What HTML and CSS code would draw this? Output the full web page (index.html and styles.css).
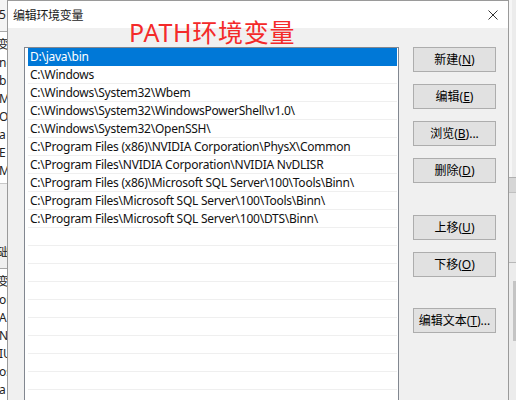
FILE: index.html
```html
<!DOCTYPE html>
<html lang="zh-CN">
<head>
<meta charset="utf-8">
<title>编辑环境变量</title>
<link rel="stylesheet" href="styles.css">
</head>
<body>
<div class="screen">
  <div class="bg-left">
    <div class="bgl-head"><span class="frag">5</span></div>
    <div class="bgl-rows">
      <div class="frag-row"><span class="frag cjk">变</span></div>
      <div class="frag-row"><span class="frag">nd</span></div>
      <div class="frag-row"><span class="frag">b</span></div>
      <div class="frag-row"><span class="frag">MS</span></div>
      <div class="frag-row"><span class="frag">Or</span></div>
      <div class="frag-row"><span class="frag">a</span></div>
      <div class="frag-row"><span class="frag">E</span></div>
      <div class="frag-row"><span class="frag">M</span></div>
    </div>
    <div class="bgl-band"><span class="frag cjk">础</span></div>
    <div class="bgl-rows">
      <div class="frag-row"><span class="frag cjk">变</span></div>
      <div class="frag-row"><span class="frag">or</span></div>
      <div class="frag-row"><span class="frag">A</span></div>
      <div class="frag-row"><span class="frag">N</span></div>
      <div class="frag-row"><span class="frag">IU</span></div>
      <div class="frag-row"><span class="frag">os</span></div>
      <div class="frag-row"><span class="frag">a</span></div>
    </div>
  </div>

  <div class="dialog">
    <div class="titlebar">
      <span class="title">编辑环境变量</span>
      <svg class="close" width="10" height="10" viewBox="0 0 10 10">
        <path d="M0.5 0.5 L9.5 9.5 M9.5 0.5 L0.5 9.5" stroke="#333" stroke-width="1" fill="none"/>
      </svg>
    </div>
    <div class="body">
      <div class="list">
        <div class="row sel">D:\java\bin</div>
        <div class="row">C:\Windows</div>
        <div class="row">C:\Windows\System32\Wbem</div>
        <div class="row">C:\Windows\System32\WindowsPowerShell\v1.0\</div>
        <div class="row">C:\Windows\System32\OpenSSH\</div>
        <div class="row">C:\Program Files (x86)\NVIDIA Corporation\PhysX\Common</div>
        <div class="row">C:\Program Files\NVIDIA Corporation\NVIDIA NvDLISR</div>
        <div class="row">C:\Program Files (x86)\Microsoft SQL Server\100\Tools\Binn\</div>
        <div class="row">C:\Program Files\Microsoft SQL Server\100\Tools\Binn\</div>
        <div class="row">C:\Program Files\Microsoft SQL Server\100\DTS\Binn\</div>
        <div class="row"></div>
        <div class="row"></div>
        <div class="row"></div>
        <div class="row"></div>
        <div class="row"></div>
        <div class="row"></div>
        <div class="row"></div>
        <div class="row"></div>
        <div class="row"></div>
        <div class="row"></div>
      </div>
      <div class="buttons">
        <button class="btn">新建(<u>N</u>)</button>
        <button class="btn">编辑(<u>E</u>)</button>
        <button class="btn">浏览(<u>B</u>)...</button>
        <button class="btn">删除(<u>D</u>)</button>
        <button class="btn gap-lg">上移(<u>U</u>)</button>
        <button class="btn">下移(<u>O</u>)</button>
        <button class="btn gap-lg2">编辑文本(<u>T</u>)...</button>
      </div>
    </div>
    <div class="annot">PATH环境变量</div>
  </div>

  <div class="bg-right">
    <div class="bgr-top"></div>
    <div class="bgr-band"></div>
    <div class="bgr-mid"></div>
    <div class="bgr-bar"></div>
  </div>
</div>
</body>
</html>
```
FILE: styles.css
```css
* { box-sizing: border-box; }

body {
  margin: 0;
  width: 516px;
  height: 400px;
  overflow: hidden;
  background: #e8e8e8;
  font-family: "Noto Sans", "Noto Sans CJK SC", sans-serif;
  font-size: 12px;
  color: #000;
}

.screen {
  display: flex;
  height: 400px;
}

/* background window, left strip */
.bg-left {
  width: 7px;
  flex: none;
  overflow: hidden;
  background: #fff;
  display: flex;
  flex-direction: column;
}
.bgl-head {
  height: 32px;
  border-bottom: 1px solid #a8a8a8;
  background: #f4f4f4;
  padding-top: 6px;
  line-height: 18px;
}
.bgl-rows {
  padding-top: 4px;
}
.frag-row {
  height: 18px;
  line-height: 18px;
  white-space: nowrap;
}
.frag {
  display: inline-block;
  margin-left: -1px;
  font-size: 12px;
  color: #222;
  white-space: nowrap;
}
.frag.cjk { margin-left: -3px; }
.bgl-band {
  margin-top: 3px;
  height: 86px;
  background: #f0f0f0;
  border-top: 1px solid #c8c8c8;
  border-bottom: 1px solid #a8a8a8;
  display: flex;
  align-items: flex-end;
  padding-bottom: 6px;
  line-height: 18px;
}

/* dialog */
.dialog {
  width: 502px;
  flex: none;
  position: relative;
  display: flex;
  flex-direction: column;
  background: #f0f0f0;
  border: 1px solid #9a9a9a;
  border-bottom: none;
}
.titlebar {
  height: 27px;
  flex: none;
  background: #fff;
  display: flex;
  align-items: center;
  justify-content: space-between;
  padding: 0 10px 0 5px;
}
.title {
  font-family: "Noto Sans CJK SC", sans-serif;
  font-size: 12px;
  letter-spacing: -0.3px;
  color: #1a1a1a;
  line-height: 16px;
  margin-top: 1px;
}
.close {
  display: block;
  margin-top: 1px;
}

.body {
  flex: 1;
  display: flex;
  gap: 14px;
  padding: 19px 0 0 16px;
  min-height: 0;
}

.list {
  width: 375px;
  flex: none;
  background: #fff;
  border: 1px solid #828790;
  border-bottom: none;
  padding: 0 1px 0 3px;
  overflow: hidden;
}
.row {
  height: 18px;
  line-height: 18px;
  padding-left: 2px;
  border-bottom: 1px solid #efefef;
  white-space: nowrap;
  letter-spacing: -0.25px;
  color: #111;
}
.row.sel {
  background: #0078d7;
  color: #fff;
  border-bottom-color: #0078d7;
}

.buttons {
  width: 83px;
  flex: none;
  display: flex;
  flex-direction: column;
  gap: 12px;
}
.btn {
  height: 25px;
  width: 83px;
  padding: 0;
  margin: 0;
  background: #e1e1e1;
  border: 1px solid #adadad;
  border-radius: 0;
  font-family: "Noto Sans", "Noto Sans CJK SC", sans-serif;
  font-size: 12px;
  color: #000;
  line-height: 23px;
}
.btn u { text-underline-offset: 1px; }
.gap-lg { margin-top: 20px; }
.gap-lg2 { margin-top: 19px; }

.annot {
  position: absolute;
  left: 121px;
  top: 18px;
  font-family: "Noto Sans", "Noto Sans CJK SC", sans-serif;
  font-size: 25px;
  line-height: 26px;
  letter-spacing: 0.7px;
  color: #f42a2a;
  white-space: nowrap;
}

/* background window, right strip */
.bg-right {
  width: 7px;
  flex: none;
  background: #ececec;
  display: flex;
  flex-direction: column;
}
.bgr-top {
  height: 177px;
  border-left: 3px solid #f6f6f6;
}
.bgr-band {
  height: 16px;
  background: #d6d6d6;
  border-top: 1px solid #b0b0b0;
  border-bottom: 1px solid #c0c0c0;
}
.bgr-mid {
  height: 70px;
  background: #e6e6e6;
  border-bottom: 1px solid #b8b8b8;
}
.bgr-bar {
  height: 60px;
  margin-top: 18px;
  margin-left: 4px;
  background: #c4c4c4;
}
```
